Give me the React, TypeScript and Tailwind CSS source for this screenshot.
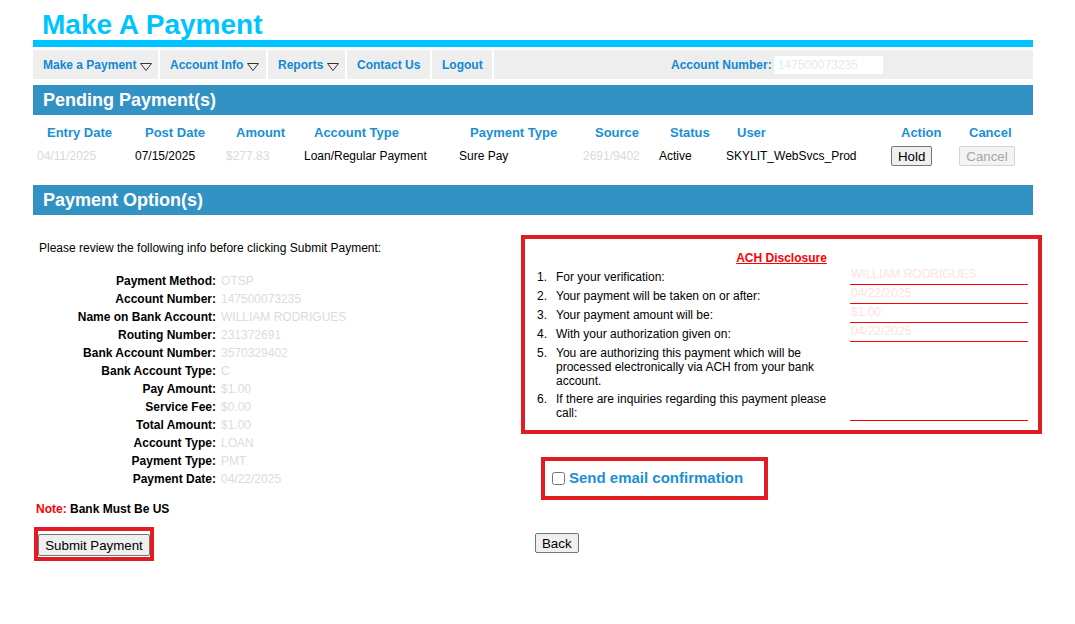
import React from "react";

const NAV = [
  { label: "Make a Payment", w: "w-[127px]", menu: true },
  { label: "Account Info", w: "w-[108px]", menu: true },
  { label: "Reports", w: "w-[79px]", menu: true },
  { label: "Contact Us", w: "w-[85px]", menu: false },
  { label: "Logout", w: "w-[62px]", menu: false },
];

const COLS = [
  { label: "Entry Date", pl: "pl-[10px]" },
  { label: "Post Date", pl: "pl-[10px]" },
  { label: "Amount", pl: "pl-[10px]" },
  { label: "Account Type", pl: "pl-[10px]" },
  { label: "Payment Type", pl: "pl-[11px]" },
  { label: "Source", pl: "pl-[12px]" },
  { label: "Status", pl: "pl-[11px]" },
  { label: "User", pl: "pl-[11px]" },
  { label: "Action", pl: "pl-[10px]" },
  { label: "Cancel", pl: "pl-[10px]" },
];

const REVIEW = [
  ["Payment Method:", "OTSP"],
  ["Account Number:", "147500073235"],
  ["Name on Bank Account:", "WILLIAM RODRIGUES"],
  ["Routing Number:", "231372691"],
  ["Bank Account Number:", "3570329402"],
  ["Bank Account Type:", "C"],
  ["Pay Amount:", "$1.00"],
  ["Service Fee:", "$0.00"],
  ["Total Amount:", "$1.00"],
  ["Account Type:", "LOAN"],
  ["Payment Type:", "PMT"],
  ["Payment Date:", "04/22/2025"],
];

const DISCLOSURE = [
  { text: "For your verification:", value: "WILLIAM RODRIGUES", line: true },
  { text: "Your payment will be taken on or after:", value: "04/22/2025", line: true },
  { text: "Your payment amount will be:", value: "$1.00", line: true },
  { text: "With your authorization given on:", value: "04/22/2025", line: true },
  { text: "You are authorizing this payment which will be processed electronically via ACH from your bank account.", value: "", line: false },
  { text: "If there are inquiries regarding this payment please call:", value: "", line: true },
];

function Caret() {
  return (
    <svg width="12" height="8" viewBox="0 0 12 8" className="ml-[4px] mt-[5px]">
      <polygon points="0.5,0.5 11.5,0.5 6,7.5" fill="none" stroke="#333" strokeWidth="1" />
    </svg>
  );
}

function Btn({ children, disabled, w }: { children: React.ReactNode; disabled?: boolean; w?: string }) {
  return (
    <button
      disabled={disabled}
      className={
        "h-[20px] px-[6px] border rounded-[2px] text-[13.3px] leading-[15px] " +
        (w ?? "") +
        " " +
        (disabled ? "border-[#d3d3d3] bg-[#f3f3f3] text-[#a5a5a5]" : "border-[#767676] bg-[#efefef] text-black")
      }
    >
      {children}
    </button>
  );
}

export default function App() {
  return (
    <div className="w-[1075px] h-[624px] overflow-hidden bg-white text-black font-['Liberation_Sans',Arial,sans-serif]">
      <div className="ml-[33px] w-[1000px]">
        <h1 className="h-[40px] pt-[9px] pl-[9px] text-[28px] leading-[31px] font-bold text-[#00c4ff]">Make A Payment</h1>
        <div className="h-[7px] bg-[#00c4ff]" />

        {/* nav */}
        <div className="mt-[3px] h-[29px] bg-[#eeeeee] flex">
          {NAV.map((n) => (
            <div key={n.label} className={n.w + " flex items-center pl-[10px] border-r-2 border-white text-[12px] font-bold text-[#1088d4]"}>
              {n.label}
              {n.menu && <Caret />}
            </div>
          ))}
          <div className="ml-[177px] flex items-center">
            <span className="text-[12px] font-bold text-[#1088d4]">Account Number:</span>
            <span className="ml-[2px] h-[18px] w-[109px] bg-white pl-[4px] text-[12px] leading-[18px] text-[#dcecf8]">147500073235</span>
          </div>
        </div>

        {/* pending */}
        <div className="mt-[6px] h-[30px] bg-[#3292c4] flex items-center pl-[10px] text-[18px] font-bold text-white">Pending Payment(s)</div>
        <div className="pl-[4px] grid grid-cols-[98px_91px_78px_155px_124px_76px_67px_165px_68px_74px]">
          {COLS.map((c) => (
            <div key={c.label} className={"mt-[7px] h-[22px] flex items-center text-[13px] font-bold text-[#1a8fd6] whitespace-nowrap " + c.pl}>{c.label}</div>
          ))}
          <div className="h-[24px] flex items-center text-[12px] text-[#dadada]">04/11/2025</div>
          <div className="h-[24px] flex items-center text-[12px]">07/15/2025</div>
          <div className="h-[24px] flex items-center text-[12px] text-[#dadada]">$277.83</div>
          <div className="h-[24px] flex items-center text-[12px]">Loan/Regular Payment</div>
          <div className="h-[24px] flex items-center text-[12px]">Sure Pay</div>
          <div className="h-[24px] flex items-center text-[12px] text-[#dadada]">2691/9402</div>
          <div className="h-[24px] flex items-center text-[12px]">Active</div>
          <div className="h-[24px] flex items-center text-[12px]">SKYLIT_WebSvcs_Prod</div>
          <div className="h-[24px] flex items-center"><Btn>Hold</Btn></div>
          <div className="h-[24px] flex items-center"><Btn disabled w="w-[56px]">Cancel</Btn></div>
        </div>

        {/* options */}
        <div className="mt-[17px] h-[30px] bg-[#3292c4] flex items-center pl-[10px] text-[18px] font-bold text-white">Payment Option(s)</div>

        <div className="flex">
          <div className="w-[488px] shrink-0">
            <p className="pt-[26px] pl-[6px] text-[12px] leading-[14px]">Please review the following info before clicking Submit Payment:</p>
            <div className="mt-[17px] grid grid-cols-[183px_auto] gap-x-[5px] text-[12px] leading-[18px]">
              {REVIEW.map(([k, v]) => (
                <React.Fragment key={k}>
                  <div className="text-right font-bold">{k}</div>
                  <div className="text-[#dcdcdc]">{v}</div>
                </React.Fragment>
              ))}
            </div>
            <p className="mt-[14px] pl-[3px] text-[12px] leading-[14px] font-bold">
              <span className="text-[#ff0000]">Note:</span> Bank Must Be US
            </p>
            <div className="mt-[11px] ml-[1px] w-[120px] h-[34px] border-4 border-[#e31b23] pt-[3px] flex items-start">
              <button className="h-[22px] w-[112px] border border-[#767676] rounded-[2px] bg-[#efefef] text-[13.3px] leading-[15px]">Submit Payment</button>
            </div>
          </div>

          <div>
            <div className="mt-[20px] w-[521px] h-[199px] border-4 border-[#e31b23]">
              <p className="pt-[12px] text-center text-[12px] leading-[14px] font-bold text-[#ff0000] underline">ACH Disclosure</p>
              <div className="mt-[1px]">
                {DISCLOSURE.map((d, i) => (
                  <div key={i} className="flex text-[12px] leading-[14px]">
                    <div className={"w-[22px] shrink-0 text-right pt-[4px] " + (i === 4 ? "pb-0" : "pb-[1px]")}>{i + 1}.</div>
                    <div className={"ml-[9px] w-[272px] shrink-0 pt-[4px] " + (i === 4 ? "pb-0" : "pb-[1px]")}>{d.text}</div>
                    <div className={"ml-[22px] w-[178px] shrink-0 " + (d.line ? "border-b border-[#ff0000]" : "")}>
                      {d.value && (
                        <div className="pl-[1px] pt-[1px] text-[12px] leading-[14px] text-[#fde3e3] whitespace-nowrap">{d.value}</div>
                      )}
                    </div>
                  </div>
                ))}
              </div>
            </div>

            <div className="mt-[23px] ml-[20px] w-[227px] h-[43px] border-4 border-[#e31b23] flex items-center pl-[7px]">
              <input type="checkbox" className="m-0 w-[13px] h-[13px]" />
              <span className="ml-[4px] text-[15px] font-bold text-[#1a8fd6]">Send email confirmation</span>
            </div>

            <div className="mt-[33px] ml-[14px] flex items-start">
              <Btn>Back</Btn>
            </div>
          </div>
        </div>
      </div>
    </div>
  );
}
